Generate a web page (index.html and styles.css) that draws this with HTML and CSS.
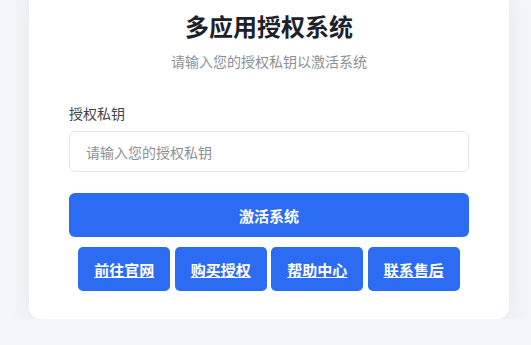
FILE: index.html
```html
<!DOCTYPE html>
<html lang="zh-CN">
<head>
<meta charset="utf-8">
<title>多应用授权系统</title>
<link rel="stylesheet" href="styles.css">
</head>
<body>
<div class="page">
  <div class="card">
    <h1 class="title">多应用授权系统</h1>
    <p class="subtitle">请输入您的授权私钥以激活系统</p>
    <label class="label" for="key">授权私钥</label>
    <input class="input" id="key" type="text" placeholder="请输入您的授权私钥">
    <button class="primary" type="button">激活系统</button>
    <div class="links">
      <a class="link-btn" href="#">前往官网</a>
      <a class="link-btn" href="#">购买授权</a>
      <a class="link-btn" href="#">帮助中心</a>
      <a class="link-btn" href="#">联系售后</a>
    </div>
  </div>
</div>
</body>
</html>
```

FILE: styles.css
```css
html, body {
  margin: 0;
  padding: 0;
  background: #f3f6f9;
  font-family: "Noto Sans CJK SC", "Noto Sans", sans-serif;
  overflow: hidden;
}
.page {
  display: flex;
  padding-left: 29px;
}
.card {
  width: 480px;
  box-sizing: border-box;
  margin-top: -16px;
  padding: 26px 40px 28px;
  background: #ffffff;
  border-radius: 12px;
  box-shadow: 0 6px 24px rgba(30, 50, 90, 0.07);
  display: flex;
  flex-direction: column;
}
.title {
  margin: 0;
  font-size: 24px;
  line-height: 32px;
  font-weight: 700;
  color: #1d2129;
  text-align: center;
}
.subtitle {
  margin: 9px 0 0;
  font-size: 14px;
  line-height: 20px;
  color: #8a9099;
  text-align: center;
}
.label {
  margin-top: 32px;
  font-size: 14px;
  line-height: 20px;
  font-weight: 400;
  color: #3f444c;
}
.input {
  margin-top: 8px;
  height: 41px;
  box-sizing: border-box;
  border: 1px solid #e1e4e9;
  border-radius: 6px;
  padding: 0 16px;
  font-family: inherit;
  font-size: 14px;
  color: #333;
  outline: none;
}
.input::placeholder {
  color: #8c9096;
}
.primary {
  margin-top: 21px;
  height: 44px;
  border: none;
  border-radius: 6px;
  background: #2b6cf2;
  color: #ffffff;
  font-family: inherit;
  font-size: 15px;
  font-weight: 700;
}
.links {
  margin-top: 10px;
  display: flex;
  justify-content: center;
  gap: 4.5px;
}
.link-btn {
  width: 92px;
  height: 44px;
  display: flex;
  align-items: center;
  justify-content: center;
  background: #2b6cf2;
  border-radius: 5px;
  color: #ffffff;
  font-size: 15px;
  font-weight: 700;
  text-decoration: underline;
}
```
